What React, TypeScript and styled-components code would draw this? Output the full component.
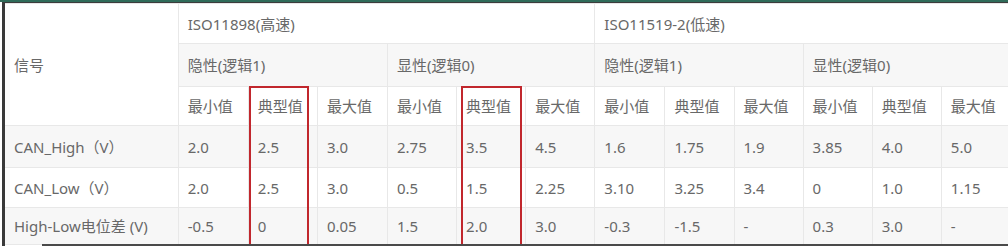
import styled, { createGlobalStyle, css } from "styled-components";

const GlobalStyle = createGlobalStyle`
    html, body {
        margin: 0;
        padding: 0;
        background: #ffffff;
        overflow: hidden;
    }
    body {
        font-family: "Noto Sans", "Noto Sans CJK SC", sans-serif;
    }
`;

type Mark = "a" | "b";

const markOffsets: Record<Mark, { left: number; right: number }> = {
    a: { left: 0, right: 8 },
    b: { left: 4, right: 3 },
};

const Screen = styled.div`
    width: 1008px;
    height: 246px;
    border-top: 2px solid #2f6b59;
    box-sizing: border-box;
    position: relative;
    overflow: hidden;

    &::after {
        content: "";
        position: absolute;
        left: 42px;
        right: 0;
        bottom: 0;
        height: 2px;
        background: #4a4a4a;
    }
`;

const Frame = styled.div`
    margin-left: 2px;
    border-left: 3px solid #3a3a3a;
    border-top: 1px solid #3c3c3c;
    height: 100%;
`;

const Table = styled.table`
    border-collapse: collapse;
    table-layout: fixed;
    width: 1007px;
    color: #686868;
    font-size: 15px;
    line-height: 20px;
`;

const Row = styled.tr<{ $h: number; $shade?: boolean }>`
    height: ${(p) => p.$h}px;
    background: ${(p) => (p.$shade ? "#f7f7f7" : "#ffffff")};
`;

const Cell = styled.td<{ $mark?: Mark; $top?: boolean }>`
    position: relative;
    padding: 0 0 0 9px;
    border: 1px solid #e8e8e8;
    text-align: left;
    vertical-align: middle;
    white-space: nowrap;
    font-weight: 400;

    &:first-child {
        border-left: none;
    }

    ${(p) =>
        p.$mark &&
        css`
            &::after {
                content: "";
                position: absolute;
                top: -1px;
                bottom: -2px;
                left: ${markOffsets[p.$mark].left}px;
                right: ${markOffsets[p.$mark].right}px;
                border-left: 2px solid #c1272d;
                border-right: 2px solid #c1272d;
                border-top: ${p.$top ? "2px solid #c1272d" : "none"};
                pointer-events: none;
            }
        `}
`;

const Head = styled(Cell).attrs({ as: "th" })``;

const widths = [173, 70, 69, 70, 69, 69, 69, 70, 69, 69, 69, 69, 70];

const measures = ["最小值", "典型值", "最大值"];

const rows = [
    ["CAN_High（V）", "2.0", "2.5", "3.0", "2.75", "3.5", "4.5", "1.6", "1.75", "1.9", "3.85", "4.0", "5.0"],
    ["CAN_Low（V）", "2.0", "2.5", "3.0", "0.5", "1.5", "2.25", "3.10", "3.25", "3.4", "0", "1.0", "1.15"],
    ["High-Low电位差 (V)", "-0.5", "0", "0.05", "1.5", "2.0", "3.0", "-0.3", "-1.5", "-", "0.3", "3.0", "-"],
];

const rowHeights = [42, 40, 37];

const markFor = (i: number): Mark | undefined => (i === 1 ? "a" : i === 4 ? "b" : undefined);

function App() {
    return (
        <>
            <GlobalStyle />
            <Screen>
                <Frame>
                    <Table>
                        <colgroup>
                            {widths.map((w, i) => (
                                <col key={i} style={{ width: w }} />
                            ))}
                        </colgroup>
                        <thead>
                            <Row $h={40}>
                                <Head rowSpan={3}>信号</Head>
                                <Head colSpan={6}>ISO11898(高速)</Head>
                                <Head colSpan={6}>ISO11519-2(低速)</Head>
                            </Row>
                            <Row $h={43} $shade>
                                <Head colSpan={3}>隐性(逻辑1)</Head>
                                <Head colSpan={3}>显性(逻辑0)</Head>
                                <Head colSpan={3}>隐性(逻辑1)</Head>
                                <Head colSpan={3}>显性(逻辑0)</Head>
                            </Row>
                            <Row $h={39}>
                                {Array.from({ length: 12 }, (_, i) => (
                                    <Head key={i} $mark={markFor(i)} $top>
                                        {measures[i % 3]}
                                    </Head>
                                ))}
                            </Row>
                        </thead>
                        <tbody>
                            {rows.map((r, ri) => (
                                <Row key={ri} $h={rowHeights[ri]} $shade={ri !== 1}>
                                    {r.map((v, ci) => (
                                        <Cell key={ci} $mark={ci === 0 ? undefined : markFor(ci - 1)}>
                                            {v}
                                        </Cell>
                                    ))}
                                </Row>
                            ))}
                        </tbody>
                    </Table>
                </Frame>
            </Screen>
        </>
    );
}

export default App;
